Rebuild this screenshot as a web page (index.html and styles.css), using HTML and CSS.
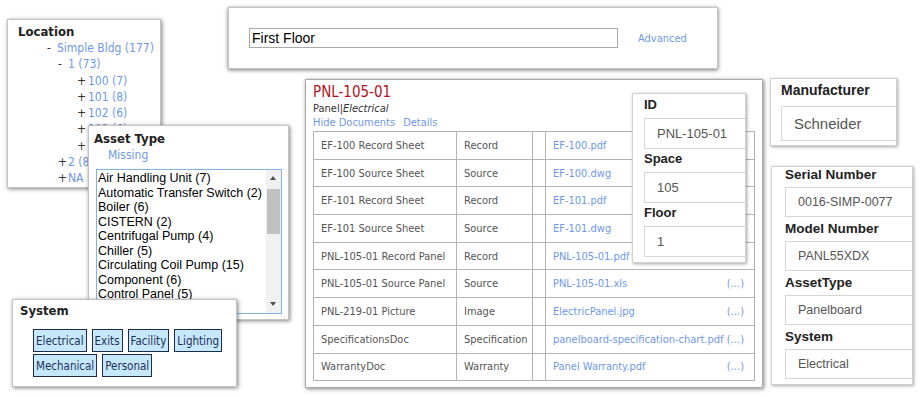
FILE: index.html
```html
<!DOCTYPE html>
<html lang="en">
<head>
    <meta charset="UTF-8">
    <meta name="viewport" content="width=device-width, initial-scale=1.0">
    <title>Asset Browser</title>
    <link rel="stylesheet" href="styles.css">
</head>
<body>
    <div class="canvas">

        <div class="panel location">
            <h3>Location</h3>
            <ul class="tree">
                <li><span class="toggle">-</span><a href="#">Simple Bldg (177)</a>
                    <ul>
                        <li><span class="toggle">-</span><a href="#">1 (73)</a>
                            <ul>
                                <li><span class="toggle">+</span><a href="#">100 (7)</a></li>
                                <li><span class="toggle">+</span><a href="#">101 (8)</a></li>
                                <li><span class="toggle">+</span><a href="#">102 (6)</a></li>
                                <li><span class="toggle">+</span><a href="#">103 (6)</a></li>
                                <li><span class="toggle">+</span><a href="#">104 (5)</a></li>
                            </ul>
                        </li>
                        <li><span class="toggle">+</span><a href="#">2 (8)</a></li>
                        <li><span class="toggle">+</span><a href="#">NA (96)</a></li>
                    </ul>
                </li>
            </ul>
        </div>

        <div class="panel asset-type">
            <h3>Asset Type</h3>
            <a href="#" class="missing">Missing</a>
            <div class="listbox">
                <ul class="options">
                    <li>Air Handling Unit (7)</li>
                    <li>Automatic Transfer Switch (2)</li>
                    <li>Boiler (6)</li>
                    <li>CISTERN (2)</li>
                    <li>Centrifugal Pump (4)</li>
                    <li>Chiller (5)</li>
                    <li>Circulating Coil Pump (15)</li>
                    <li>Component (6)</li>
                    <li>Control Panel (5)</li>
                </ul>
                <div class="scrollbar">
                    <span class="arrow up"></span>
                    <span class="thumb"></span>
                    <span class="arrow down"></span>
                </div>
            </div>
        </div>

        <div class="panel system">
            <h3>System</h3>
            <div class="tags">
                <button>Electrical</button>
                <button>Exits</button>
                <button>Facility</button>
                <button>Lighting</button>
                <button>Mechanical</button>
                <button>Personal</button>
            </div>
        </div>

        <div class="panel search">
            <input type="text" class="search-input" value="First Floor">
            <a href="#" class="advanced">Advanced</a>
        </div>

        <div class="panel documents">
            <h2 class="asset-name">PNL-105-01</h2>
            <p class="meta">Panel|<em>Electrical</em></p>
            <p class="doc-links"><a href="#">Hide Documents</a><a href="#">Details</a></p>
            <table class="doc-table">
                <colgroup>
                    <col class="c-name">
                    <col class="c-type">
                    <col class="c-gap">
                    <col class="c-file">
                </colgroup>
                <tr><td>EF-100 Record Sheet</td><td>Record</td><td></td><td class="file"><a href="#">EF-100.pdf</a><a href="#" class="more">(...)</a></td></tr>
                <tr><td>EF-100 Source Sheet</td><td>Source</td><td></td><td class="file"><a href="#">EF-100.dwg</a><a href="#" class="more">(...)</a></td></tr>
                <tr><td>EF-101 Record Sheet</td><td>Record</td><td></td><td class="file"><a href="#">EF-101.pdf</a><a href="#" class="more">(...)</a></td></tr>
                <tr><td>EF-101 Source Sheet</td><td>Source</td><td></td><td class="file"><a href="#">EF-101.dwg</a><a href="#" class="more">(...)</a></td></tr>
                <tr><td>PNL-105-01 Record Panel</td><td>Record</td><td></td><td class="file"><a href="#">PNL-105-01.pdf</a><a href="#" class="more">(...)</a></td></tr>
                <tr><td>PNL-105-01 Source Panel</td><td>Source</td><td></td><td class="file"><a href="#">PNL-105-01.xls</a><a href="#" class="more">(...)</a></td></tr>
                <tr><td>PNL-219-01 Picture</td><td>Image</td><td></td><td class="file"><a href="#">ElectricPanel.jpg</a><a href="#" class="more">(...)</a></td></tr>
                <tr><td>SpecificationsDoc</td><td>Specification</td><td></td><td class="file"><a href="#">panelboard-specification-chart.pdf</a><a href="#" class="more">(...)</a></td></tr>
                <tr><td>WarrantyDoc</td><td>Warranty</td><td></td><td class="file"><a href="#">Panel Warranty.pdf</a><a href="#" class="more">(...)</a></td></tr>
            </table>
        </div>

        <div class="panel card id-card">
            <label>ID</label>
            <input type="text" value="PNL-105-01" readonly>
            <label>Space</label>
            <input type="text" value="105" readonly>
            <label>Floor</label>
            <input type="text" value="1" readonly>
        </div>

        <div class="panel card maker-card">
            <label>Manufacturer</label>
            <input type="text" value="Schneider" readonly>
        </div>

        <div class="panel card serial-card">
            <label>Serial Number</label>
            <input type="text" value="0016-SIMP-0077" readonly>
            <label>Model Number</label>
            <input type="text" value="PANL55XDX" readonly>
            <label>AssetType</label>
            <input type="text" value="Panelboard" readonly>
            <label>System</label>
            <input type="text" value="Electrical" readonly>
        </div>

    </div>
</body>
</html>
```

FILE: styles.css
```css
* {
    margin: 0;
    padding: 0;
    box-sizing: border-box;
}
body {
    background: #fff;
    color: #333;
    font-family: "DejaVu Sans Condensed", "DejaVu Sans", sans-serif;
}
a {
    color: #7097ea;
    text-decoration: none;
}
ul {
    list-style: none;
}
.canvas {
    position: relative;
    width: 921px;
    height: 397px;
    overflow: hidden;
}
.panel {
    position: absolute;
    background: #fff;
    border: 1px solid #c4c4c4;
    box-shadow: 1px 1px 4px rgba(0,0,0,0.5);
    overflow: hidden;
}
.panel h3 {
    font-size: 13px;
    line-height: 16px;
    color: #222;
}

/* location tree */
.location {
    left: 7px;
    top: 19px;
    width: 154px;
    height: 169px;
    padding: 4px 0 0 10px;
}
.tree {
    padding-left: 29px;
    font-size: 12px;
    line-height: 16.3px;
    white-space: nowrap;
}
.tree ul {
    padding-left: 11px;
}
.tree ul ul {
    padding-left: 19px;
}
.toggle {
    display: inline-block;
    width: 10px;
    color: #333;
}
.tree ul ul .toggle {
    width: 11px;
}

/* asset type */
.asset-type {
    left: 88px;
    top: 125px;
    width: 201px;
    height: 195px;
    padding: 5px 0 0 5px;
}
.missing {
    display: block;
    padding-left: 14px;
    font-size: 12px;
    line-height: 16px;
}
.listbox {
    display: flex;
    width: 186px;
    height: 145px;
    margin: 6px 0 0 2px;
    border: 1px solid #7eb4ea;
}
.options {
    flex: 1;
    padding: 1px 0 0 1px;
    font-family: "Liberation Sans", Arial, sans-serif;
    font-size: 12.5px;
    line-height: 14.5px;
    color: #000;
    white-space: nowrap;
    overflow: hidden;
}
.scrollbar {
    width: 15px;
    display: flex;
    flex-direction: column;
    align-items: center;
    background: #f1f1f1;
}
.arrow {
    height: 17px;
    width: 15px;
    position: relative;
}
.arrow::after {
    content: "";
    position: absolute;
    left: 4px;
    top: 6px;
    border-left: 3.5px solid transparent;
    border-right: 3.5px solid transparent;
}
.arrow.up::after {
    border-bottom: 4px solid #505050;
}
.arrow.down {
    margin-top: auto;
}
.arrow.down::after {
    border-top: 4px solid #505050;
}
.thumb {
    width: 13px;
    height: 45px;
    margin-top: 2px;
    background: #c1c1c1;
}

/* system */
.system {
    left: 12px;
    top: 299px;
    width: 225px;
    height: 88px;
    padding: 3px 0 0 7px;
}
.tags {
    display: flex;
    flex-wrap: wrap;
    gap: 2px 5px;
    width: 200px;
    margin: 10px 0 0 13px;
}
.tags button {
    height: 23px;
    padding: 0 2px;
    font-family: inherit;
    font-size: 11.5px;
    color: #1f2f5a;
    background: #c5e8fd;
    border: 1px solid #1d2b4e;
}

/* search */
.search {
    left: 228px;
    top: 7px;
    width: 490px;
    height: 62px;
    display: flex;
    align-items: center;
    gap: 20px;
    padding-left: 20px;
    box-shadow: 0 1px 4px rgba(0,0,0,0.55);
}
.search-input {
    width: 369px;
    height: 20px;
    padding: 0 2px;
    border: 1px solid #a9a9a9;
    font-family: "Liberation Sans", Arial, sans-serif;
    font-size: 14px;
    color: #000;
}
.advanced {
    font-size: 11px;
}

/* documents */
.documents {
    left: 305px;
    top: 79px;
    width: 458px;
    height: 309px;
    padding: 3px 0 0 7px;
    border-color: #aaa;
}
.asset-name {
    font-size: 15px;
    line-height: 18px;
    font-weight: normal;
    color: #b5121b;
}
.meta {
    margin-top: 1px;
    font-size: 11px;
    line-height: 14px;
    color: #333;
}
.doc-links {
    font-size: 11px;
    line-height: 14px;
}
.doc-links a + a {
    margin-left: 8px;
}
.doc-table {
    margin-top: 1px;
    width: 441px;
    border-collapse: collapse;
    table-layout: fixed;
    font-size: 11px;
    color: #555;
}
.c-name { width: 143px; }
.c-type { width: 76px; }
.c-gap { width: 13px; }
.c-file { width: 209px; }
.doc-table tr {
    height: 27.7px;
}
.doc-table td {
    border: 1px solid #b3b3b3;
    padding: 0 7px;
    white-space: nowrap;
}
.doc-table td.file {
    padding-right: 10px;
}
.more {
    float: right;
}

/* field cards */
.card {
    box-shadow: 1px 1px 3px rgba(0,0,0,0.35);
    border-color: #d0d0d0;
}
.card label {
    display: block;
    font-family: "Liberation Sans", Arial, sans-serif;
    font-weight: bold;
    line-height: 16px;
    color: #222;
}
.card input {
    display: block;
    width: 160px;
    border: 1px solid #d6d6d6;
    padding-left: 12px;
    font-family: "Liberation Sans", Arial, sans-serif;
    color: #555;
    background: #fff;
}
.id-card {
    left: 632px;
    top: 93px;
    width: 114px;
    height: 170px;
    padding: 3px 0 0 11px;
}
.id-card label {
    font-size: 13px;
    margin-top: 2px;
}
.id-card label:first-child {
    margin-top: 0;
}
.id-card input {
    height: 31px;
    margin-top: 5px;
    font-size: 13px;
}
.maker-card {
    left: 770px;
    top: 78px;
    width: 127px;
    height: 68px;
    padding: 3px 0 0 10px;
}
.maker-card label {
    font-size: 14px;
}
.maker-card input {
    height: 35px;
    margin-top: 8px;
    font-size: 15px;
}
.serial-card {
    left: 771px;
    top: 166px;
    width: 142px;
    height: 219px;
    padding: 0 0 0 13px;
}
.serial-card label {
    font-size: 13.5px;
    margin-top: 4px;
}
.serial-card label:first-child {
    margin-top: 0;
}
.serial-card input {
    height: 30px;
    margin-top: 4px;
    font-size: 12.5px;
}
```
